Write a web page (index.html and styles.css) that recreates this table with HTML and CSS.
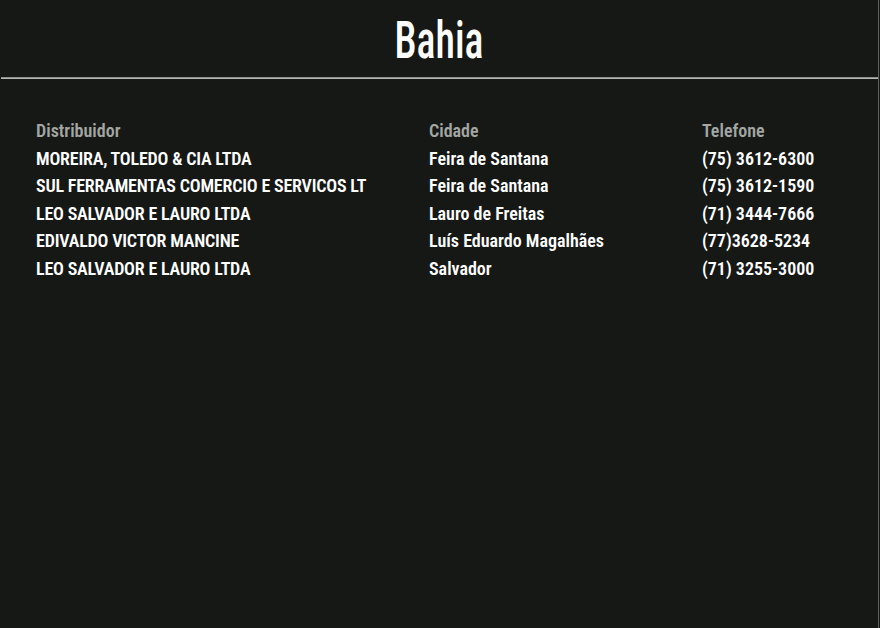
FILE: index.html
```html
<!DOCTYPE html>
<html lang="pt-BR">
<head>
<meta charset="utf-8">
<title>Bahia</title>
<link rel="stylesheet" href="styles.css">
</head>
<body>
<div class="page">
  <h1 class="title">Bahia</h1>
  <div class="rule"></div>
  <div class="table">
    <div class="th">Distribuidor</div>
    <div class="th">Cidade</div>
    <div class="th">Telefone</div>

    <div class="td name">MOREIRA, TOLEDO &amp; CIA LTDA</div>
    <div class="td">Feira de Santana</div>
    <div class="td">(75) 3612-6300</div>

    <div class="td name">SUL FERRAMENTAS COMERCIO E SERVICOS LT</div>
    <div class="td">Feira de Santana</div>
    <div class="td">(75) 3612-1590</div>

    <div class="td name">LEO SALVADOR E LAURO LTDA</div>
    <div class="td">Lauro de Freitas</div>
    <div class="td">(71) 3444-7666</div>

    <div class="td name">EDIVALDO VICTOR MANCINE</div>
    <div class="td">Luís Eduardo Magalhães</div>
    <div class="td">(77)3628-5234</div>

    <div class="td name">LEO SALVADOR E LAURO LTDA</div>
    <div class="td">Salvador</div>
    <div class="td">(71) 3255-3000</div>
  </div>
</div>
</body>
</html>
```
FILE: styles.css
```css
html, body {
  margin: 0;
  padding: 0;
  height: 100%;
}
body {
  background: #161816;
  font-family: Roboto, "Liberation Sans", sans-serif;
  font-stretch: 75%;
  color: #ffffff;
}
.page {
  height: 628px;
  box-sizing: border-box;
  border-right: 1px solid #56645a;
  margin-right: 1px;
  padding-top: 11px;
}
.title {
  margin: 0;
  font-size: 51px;
  line-height: 60px;
  font-weight: 500;
  text-align: center;
  color: #ffffff;
  transform: scaleX(0.78);
}
.rule {
  margin: 6px 0 0 1px;
  height: 1px;
  background: #b4b7b2;
  border-top: 1px solid #8c8f8a;
}
.table {
  display: grid;
  grid-template-columns: 393px 273px 1fr;
  padding: 38px 0 0 36px;
  font-size: 18px;
  line-height: 27.5px;
  font-weight: 600;
}
.th {
  color: #a3a6a2;
}
.td {
  color: #ffffff;
  white-space: nowrap;
}
.name {
  letter-spacing: -0.2px;
}
```
